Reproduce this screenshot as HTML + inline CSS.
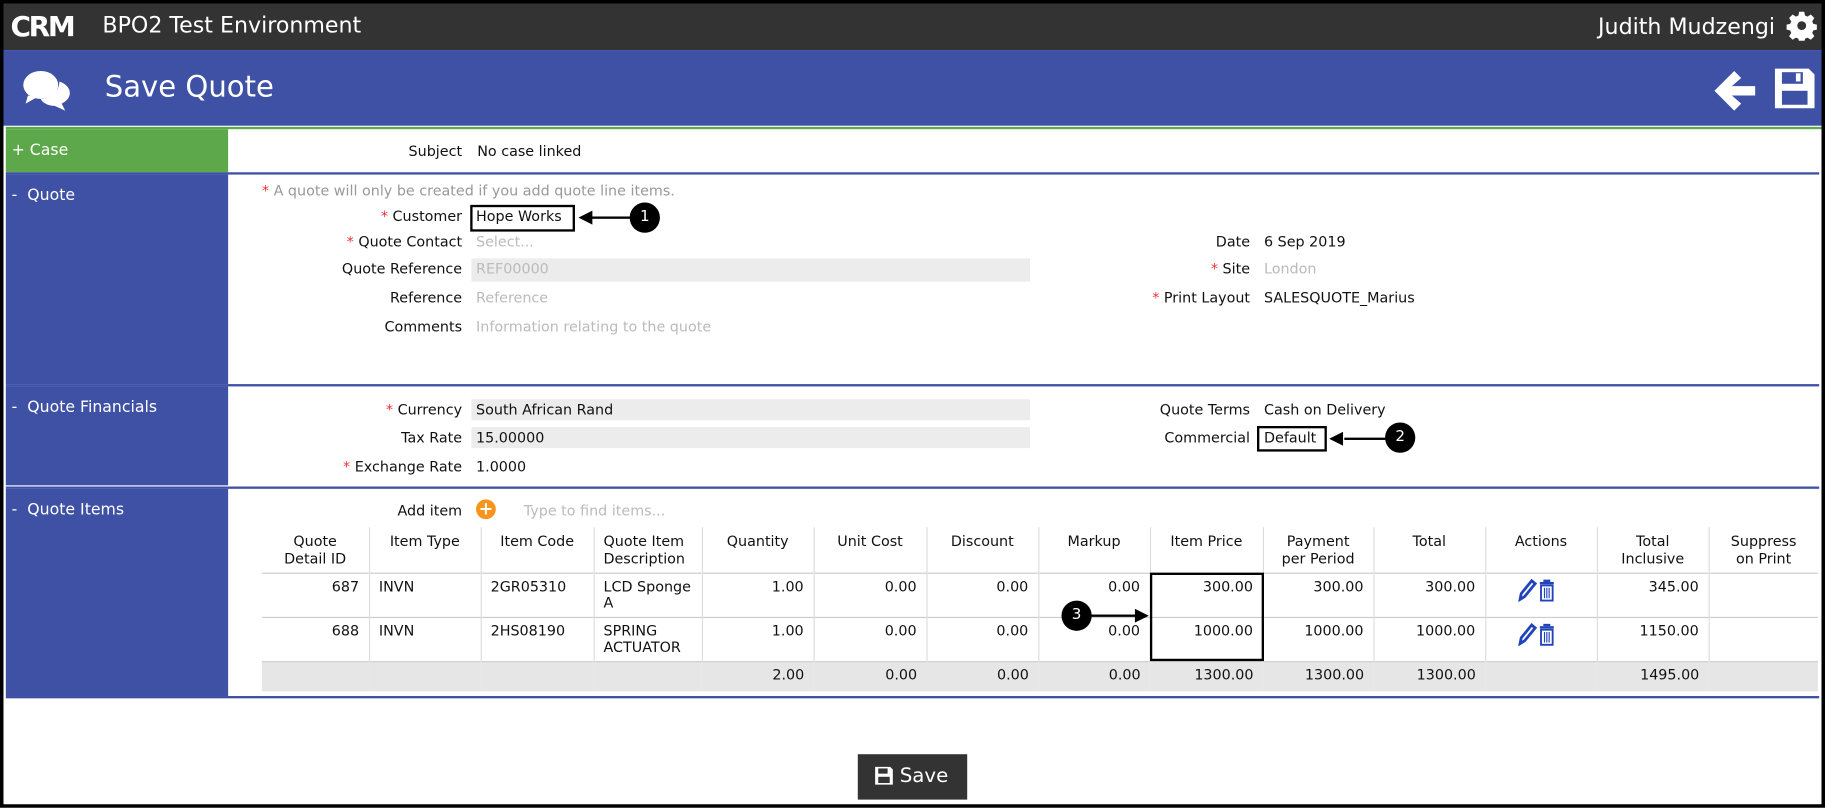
<!DOCTYPE html>
<html><head><meta charset="utf-8"><style>
*{margin:0;padding:0;box-sizing:border-box}
html,body{width:1825px;height:808px;overflow:hidden;background:#fff}
#w{position:absolute;left:0;top:0;width:1568px;height:694px;transform:scale(1.16390);transform-origin:0 0;font-family:"DejaVu Sans",Verdana,sans-serif;font-size:12.3px;color:#111;border:3px solid #000;background:#fff}
.a{position:absolute;white-space:nowrap}
.lbl{position:absolute;text-align:right;white-space:nowrap}
.r{color:#e33}
.ph{color:#bbb}
.box{position:absolute;background:#ececec}
.side{position:absolute;left:2px;width:191px;color:#fff;font-size:13.5px;padding:6px 5px}
.hl{position:absolute;left:2px;right:2px;height:2px;background:#3f51a5}
table{position:absolute;left:222px;top:450px;width:1337px;border-collapse:collapse;font-size:12.3px}
td,th{border-left:1px solid #ddd;font-weight:normal;padding:4px 8px;vertical-align:top}
td:first-child,th:first-child{border-left:none}
th{text-align:center;height:38px;line-height:15px;padding-top:5px}
tbody td{height:38px;text-align:right;border-top:1px solid #ccc}
tbody td.l{text-align:left}
tr.tot td{background:#e6e6e6;height:25px;border-left:none}
.ann{position:absolute;border:2px solid #000}
.c{position:absolute;width:26px;height:26px;border-radius:50%;background:#000;color:#fff;font-size:13px;text-align:center;line-height:26px}
.ln{position:absolute;height:2px;background:#000}
</style></head><body><div id="w">
<div class="a" style="left:0;top:0;width:1562px;height:40px;background:#333"></div>
<div class="a" style="left:6px;top:6px;color:#fff;font:bold 24px 'DejaVu Sans',sans-serif;letter-spacing:-2px">CRM</div>
<div class="a" style="left:85px;top:8px;color:#fff;font-size:19px">BPO2 Test Environment</div>
<div class="a" style="left:1370px;top:9px;color:#fff;font-size:19px">Judith Mudzengi</div>
<svg class="a" style="left:1532px;top:6px" width="26" height="26" viewBox="0 0 24 24"><path fill="#fff" d="M10 1h4l.6 3 2 .9 2.6-1.7 2.8 2.8-1.7 2.6.9 2 3 .6v4l-3 .6-.9 2 1.7 2.6-2.8 2.8-2.6-1.7-2 .9-.6 3h-4l-.6-3-2-.9-2.6 1.7-2.8-2.8 1.7-2.6-.9-2-3-.6v-4l3-.6.9-2-1.7-2.6 2.8-2.8 2.6 1.7 2-.9z"/><circle cx="12" cy="12" r="3.5" fill="#333"/></svg>
<div class="a" style="left:0;top:40px;width:1562px;height:65px;background:#3f51a5"></div>
<svg class="a" style="left:15px;top:55px" width="44" height="40" viewBox="0 0 44 40"><ellipse cx="17" cy="15" rx="15" ry="12" fill="#fff"/><path d="M6 24l-2 7 9-5z" fill="#fff"/><path d="M33 12c6 2 9 6 9 10 0 4-3 7-7 9l3 6-9-4c-6 0-11-3-12-6 9 0 16-7 16-15z" fill="#fff"/></svg>
<div class="a" style="left:87px;top:57px;color:#fff;font-size:25px">Save Quote</div>
<svg class="a" style="left:1468px;top:56px" width="40" height="38" viewBox="0 0 40 38"><path d="M2 19L19 2l6 6-8 7h20v8H17l8 7-6 6z" fill="#fff"/></svg>
<svg class="a" style="left:1520px;top:54px" width="38" height="38" viewBox="0 0 38 38"><path d="M2 2h29l5 5v29H2z" fill="#fff"/><rect x="8" y="5" width="18" height="10" fill="#3f51a5"/><rect x="20" y="6" width="4" height="7" fill="#fff"/><rect x="8" y="21" width="22" height="12" fill="#3f51a5"/></svg>
<div class="a" style="left:2px;top:106px;width:1560px;height:2px;background:#5da84a"></div>
<div class="side" style="top:108px;height:37px;background:#5da84a;padding-top:10px">+ Case</div>
<div class="lbl" style="right:1168px;top:120px">Subject</div><div class="a" style="left:407px;top:120px">No case linked</div>
<div class="hl" style="top:145px"></div>
<div class="side" style="top:147px;height:180px;background:#3f51a5;padding-top:10px">-&nbsp; Quote</div>
<div class="a ph" style="left:222px;top:154px;color:#999"><span class="r">*</span> A quote will only be created if you add quote line items.</div>
<div class="lbl" style="right:1168px;top:176px"><span class="r">*</span> Customer</div><div class="a" style="left:406px;top:176px">Hope Works</div>
<div class="lbl" style="right:1168px;top:198px"><span class="r">*</span> Quote Contact</div><div class="a ph" style="left:406px;top:198px">Select...</div>
<div class="lbl" style="right:1168px;top:221px">Quote Reference</div><div class="box" style="left:402px;top:219px;width:480px;height:20px"></div><div class="a ph" style="left:406px;top:221px">REF00000</div>
<div class="lbl" style="right:1168px;top:246px">Reference</div><div class="a ph" style="left:406px;top:246px">Reference</div>
<div class="lbl" style="right:1168px;top:271px">Comments</div><div class="a ph" style="left:406px;top:271px">Information relating to the quote</div>
<div class="lbl" style="right:491px;top:198px">Date</div><div class="a" style="left:1083px;top:198px">6 Sep 2019</div>
<div class="lbl" style="right:491px;top:221px"><span class="r">*</span> Site</div><div class="a ph" style="left:1083px;top:221px">London</div>
<div class="lbl" style="right:491px;top:246px"><span class="r">*</span> Print Layout</div><div class="a" style="left:1083px;top:246px">SALESQUOTE_Marius</div>
<div class="hl" style="top:327px"></div>
<div class="side" style="top:329px;height:85px;background:#3f51a5;padding-top:10px">-&nbsp; Quote Financials</div>
<div class="lbl" style="right:1168px;top:342px"><span class="r">*</span> Currency</div><div class="box" style="left:402px;top:340px;width:480px;height:18px"></div><div class="a" style="left:406px;top:342px">South African Rand</div>
<div class="lbl" style="right:1168px;top:366px">Tax Rate</div><div class="box" style="left:402px;top:364px;width:480px;height:18px"></div><div class="a" style="left:406px;top:366px">15.00000</div>
<div class="lbl" style="right:1168px;top:391px"><span class="r">*</span> Exchange Rate</div><div class="a" style="left:406px;top:391px">1.0000</div>
<div class="lbl" style="right:491px;top:342px">Quote Terms</div><div class="a" style="left:1083px;top:342px">Cash on Delivery</div>
<div class="lbl" style="right:491px;top:366px">Commercial</div><div class="a" style="left:1083px;top:366px">Default</div>
<div class="hl" style="top:415px"></div>
<div class="side" style="top:417px;height:178px;background:#3f51a5;padding-top:10px">-&nbsp; Quote Items</div>
<div class="lbl" style="right:1168px;top:429px">Add item</div>
<div class="a" style="left:406px;top:426px;width:17px;height:17px;border-radius:50%;background:#f7941d;color:#fff;font-weight:bold;text-align:center;line-height:17px;font-size:15px">+</div>
<div class="a ph" style="left:447px;top:429px">Type to find items...</div>
<table>
<thead><tr><th style="width:92px">Quote<br>Detail ID</th><th style="width:96px">Item Type</th><th style="width:97px">Item Code</th><th style="width:93px;text-align:left">Quote Item<br>Description</th><th style="width:96px">Quantity</th><th style="width:97px">Unit Cost</th><th style="width:96px">Discount</th><th style="width:96px">Markup</th><th style="width:97px">Item Price</th><th style="width:95px">Payment<br>per Period</th><th style="width:96px">Total</th><th style="width:96px">Actions</th><th style="width:96px">Total<br>Inclusive</th><th>Suppress<br>on Print</th></tr></thead>
<tbody>
<tr><td>687</td><td class="l">INVN</td><td class="l">2GR05310</td><td class="l">LCD Sponge<br>A</td><td>1.00</td><td>0.00</td><td>0.00</td><td>0.00</td><td>300.00</td><td>300.00</td><td>300.00</td><td class="l" style="padding-left:27px"><svg width="40" height="20" viewBox="0 0 40 20"><path d="M2 18l1-5 9-11 3 2.5-9 11z" fill="none" stroke="#2244bb" stroke-width="2.4"/><rect x="22" y="1" width="6" height="2" fill="#2244bb"/><rect x="19" y="3" width="12" height="2" fill="#2244bb"/><path d="M20 6h10v13H20z" fill="none" stroke="#2244bb" stroke-width="1.6"/><path d="M23 8v9M25 8v9M27 8v9" stroke="#2244bb"/></svg></td><td>345.00</td><td></td></tr>
<tr><td>688</td><td class="l">INVN</td><td class="l">2HS08190</td><td class="l">SPRING<br>ACTUATOR</td><td>1.00</td><td>0.00</td><td>0.00</td><td>0.00</td><td>1000.00</td><td>1000.00</td><td>1000.00</td><td class="l" style="padding-left:27px"><svg width="40" height="20" viewBox="0 0 40 20"><path d="M2 18l1-5 9-11 3 2.5-9 11z" fill="none" stroke="#2244bb" stroke-width="2.4"/><rect x="22" y="1" width="6" height="2" fill="#2244bb"/><rect x="19" y="3" width="12" height="2" fill="#2244bb"/><path d="M20 6h10v13H20z" fill="none" stroke="#2244bb" stroke-width="1.6"/><path d="M23 8v9M25 8v9M27 8v9" stroke="#2244bb"/></svg></td><td>1150.00</td><td></td></tr>
<tr class="tot"><td></td><td></td><td></td><td></td><td>2.00</td><td>0.00</td><td>0.00</td><td>0.00</td><td>1300.00</td><td>1300.00</td><td>1300.00</td><td></td><td>1495.00</td><td></td></tr>
</tbody></table>
<div class="hl" style="top:595px"></div>
<div class="a" style="left:734px;top:645px;width:94px;height:39px;background:#333;color:#fff;font-size:17px;padding:9px 0 0 36px">Save</div>
<svg class="a" style="left:748px;top:655px" width="17" height="17" viewBox="0 0 38 38"><path d="M2 2h29l5 5v29H2z" fill="#fff"/><rect x="8" y="5" width="18" height="10" fill="#333"/><rect x="8" y="21" width="22" height="12" fill="#333"/></svg>
<div class="ann" style="left:401px;top:173px;width:90px;height:23px"></div>
<div class="ln" style="left:502px;top:183px;width:38px"></div><svg class="a" style="left:494px;top:178px" width="12" height="12"><path d="M0 6L12 0v12z"/></svg>
<div class="c" style="left:538px;top:171px">1</div>
<div class="ann" style="left:1077px;top:363px;width:60px;height:22px"></div>
<div class="ln" style="left:1152px;top:373px;width:36px"></div><svg class="a" style="left:1139px;top:368px" width="12" height="12"><path d="M0 6L12 0v12z"/></svg>
<div class="c" style="left:1187px;top:360px">2</div>
<div class="ann" style="left:985px;top:489px;width:98px;height:76px"></div>
<div class="c" style="left:909px;top:513px">3</div>
<div class="ln" style="left:934px;top:525px;width:40px"></div><svg class="a" style="left:972px;top:520px" width="12" height="12"><path d="M12 6L0 0v12z"/></svg>
</div></body></html>
